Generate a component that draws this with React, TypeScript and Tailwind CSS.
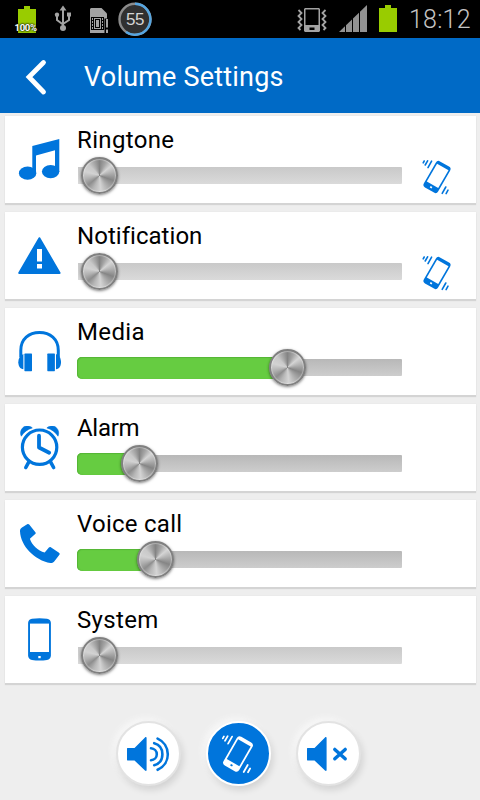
import type { ReactNode } from "react";

function MusicIcon() {
  return (
    <svg width="46" height="46" viewBox="0 0 46 46" fill="#0075dc">
      <path d="M15.3 8 42.3 1v33H38V12.2L19 17.6V36h-3.7z" />
      <ellipse cx="10.6" cy="35.2" rx="8.7" ry="6.6" />
      <ellipse cx="33.6" cy="33.6" rx="8.7" ry="6.6" />
    </svg>
  );
}

function WarningIcon() {
  return (
    <svg width="46" height="46" viewBox="0 0 46 46">
      <path
        d="M22.4 4.2 42.6 39H2.2z"
        fill="#0075dc"
        stroke="#0075dc"
        strokeWidth="2"
        strokeLinejoin="round"
      />
      <path d="M20 15h5v12.5h-5zM20 30h5v4.6h-5z" fill="#fff" />
    </svg>
  );
}

function HeadphonesIcon() {
  return (
    <svg width="46" height="46" viewBox="0 0 46 46" fill="#0075dc">
      <path
        d="M3.8 27V20.5C3.8 9 12 2.6 22.5 2.6S41.3 9 41.3 20.5V27"
        fill="none"
        stroke="#0075dc"
        strokeWidth="3"
      />
      <path d="M6.4 24v15.3C3 39 1.3 36 1.3 32.3S2.8 25.5 6.4 24z" />
      <path d="M39 24v15.3c3.4-.3 5-3.3 5-7S42.6 25.5 39 24z" />
      <rect x="7.4" y="23.6" width="7.6" height="17.6" rx="0.6" />
      <rect x="30.3" y="23.6" width="7.6" height="17.6" rx="0.6" />
    </svg>
  );
}

function AlarmIcon() {
  return (
    <svg width="46" height="46" viewBox="0 0 46 46" fill="none" stroke="#0075dc">
      <circle cx="22.6" cy="21.2" r="17.2" strokeWidth="3.2" />
      <path
        d="M22 9.7v11.8l10.2 5.2"
        strokeWidth="3.8"
        strokeLinecap="round"
        strokeLinejoin="round"
      />
      <path d="M12 35.7l-3.2 5.8M33.4 35.7l3.2 5.8" strokeWidth="3.6" strokeLinecap="round" />
      <path
        d="M4.3 10.2C2.2 6 5 .2 9.7.1c2.3 0 4.4.6 5.6 1.8C10.6 3.2 6.7 6.2 4.3 10.2zM41 10.2C43 6 40.2.2 35.5.1c-2.3 0-4.4.6-5.6 1.8C34.6 3.2 38.6 6.2 41 10.2z"
        fill="#0075dc"
        strokeWidth="0.6"
      />
    </svg>
  );
}

function CallIcon() {
  return (
    <svg width="46" height="46" viewBox="0 0 46 46" fill="#0075dc">
      <path d="M10.2 2.2C11 1.7 11.7 1.8 12.2 2.6l6.2 7.6c.5.7.4 1.3-.2 1.9l-5.3 4.7c1.8 6.2 8 12 14.8 13.7l4.2-5c.6-.6 1.2-.7 1.9-.3l8.2 5.6c.8.6.9 1.3.4 2l-5 6.4c-1 1.3-2.2 2-4 1.8C18 38.5 3.5 24 3 9.2 2.9 7.5 3.7 6.5 5 5.6z" />
    </svg>
  );
}

function PhoneIcon() {
  return (
    <svg width="46" height="46" viewBox="0 0 46 46">
      <path
        d="M15 .8Q22.5-.2 30 .8q3.6.4 3.9 4v33q-.3 3.6-3.9 4.2-7.5 1-15 0-3.6-.6-3.9-4.2v-33Q11.4 1.2 15 .8z"
        fill="#0075dc"
      />
      <rect x="13" y="5.6" width="19" height="28.4" fill="#fff" />
      <rect x="21.3" y="38" width="2.4" height="2.2" fill="#fff" />
    </svg>
  );
}

function VibrateIcon({ size, color, screen }: { size: number; color: string; screen: string }) {
  return (
    <svg width={size} height={size} viewBox="-20 -20 40 40">
      <g transform="rotate(30)">
        <rect x="-8.2" y="-15" width="16.4" height="30" rx="3" fill={color} />
        <rect x="-6.6" y="-11.6" width="13.2" height="20.6" fill={screen} />
        <rect x="-1" y="11" width="2" height="1.6" fill={screen} />
      </g>
      <path
        d="M-9.4-16.2l-2.4 4.2M-5.4-15.8l-3.6 6.4M8.8 10l-3.6 6.4M11 13.2l-1.9 3.4M-12.8-16l-1 1.8"
        stroke={color}
        strokeWidth="1.6"
        strokeLinecap="round"
      />
    </svg>
  );
}

function SpeakerIcon({ muted }: { muted?: boolean }) {
  return (
    <svg width="46" height="40" viewBox="0 0 46 40" fill="none" stroke="#0075dc">
      <path
        d="M2.5 14h7L20 3.5c.8-.8 1.6-.5 1.6.5v32c0 1-.8 1.3-1.6.5L9.5 26.5h-7c-.3 0-.5-.2-.5-.5V14.5c0-.3.2-.5.5-.5z"
        fill="#0075dc"
        stroke="none"
      />
      {muted ? (
        <path d="M29.8 15.4l10.4 9.4M40.2 15.4l-10.4 9.4" strokeWidth="3.4" strokeLinecap="round" />
      ) : (
        <g strokeWidth="2.6" strokeLinecap="round">
          <path d="M26 14.3c3.2.2 5.8 2.7 5.8 5.9S29.2 26 26 26.2" />
          <path d="M29.2 9.2c5.1 1.4 8.2 5.6 8.2 11s-3.1 9.6-8.2 11" />
          <path d="M32.6 4.6c6.2 2.7 10.2 8.8 10.2 15.6s-4 12.9-10.2 15.6" />
        </g>
      )}
    </svg>
  );
}

function StatusBar() {
  return (
    <div className="flex h-[38px] items-start justify-between bg-black pr-[9px] pl-[14px]">
      <div className="flex items-start">
        <div className="relative h-[38px] w-[26px]">
          <svg width="26" height="38" viewBox="0 0 26 38" fill="#99cc00">
            <path d="M4 9h6V6h6v3h6v24H4z" />
          </svg>
          <span className="absolute top-[22px] left-[0.5px] text-[9.5px] leading-3 font-bold tracking-[-0.3px] text-white [text-shadow:0_0_2px_#000,0_0_2px_#000]">
            100%
          </span>
        </div>
        <svg
          className="ml-[14px]"
          width="18"
          height="38"
          viewBox="0 0 18 38"
          fill="none"
          stroke="#a3a3a3"
          strokeWidth="2"
        >
          <path d="M9 9v19M9 24.5l-6-4.5v-5M9 24l6-4V15" />
          <path d="M9 5.5l3.5 5h-7z" fill="#a3a3a3" stroke="none" />
          <circle cx="9" cy="28" r="3" fill="#a3a3a3" stroke="none" />
          <circle cx="3" cy="14.8" r="2.2" fill="#a3a3a3" stroke="none" />
          <path d="M13 12.5h4v4h-4z" fill="#a3a3a3" stroke="none" />
        </svg>
        <svg className="ml-[18px]" width="19" height="38" viewBox="0 0 19 38">
          <path d="M1 8h10.5L17 13.5V33H0V9z" fill="#a3a3a3" />
          <path d="M14.5 18.5H19V34h-4.5z" fill="#000" />
          <path d="M16 19h2v8.5h-2zM16 29.5h2V33h-2z" fill="#a3a3a3" />
          <rect x="1.5" y="17.5" width="12" height="12" fill="none" stroke="#000" />
          <path
            d="M3.5 17.5v12M11.5 17.5v12M1.5 20.5h2M1.5 23.5h2M1.5 26.5h2M11.5 20.5h2M11.5 23.5h2M11.5 26.5h2"
            stroke="#000"
          />
          <rect x="5.5" y="19.5" width="4" height="8" fill="none" stroke="#000" />
        </svg>
        <div className="relative ml-[9px] h-[38px] w-[35px]">
          <svg width="35" height="38" viewBox="0 0 35 38">
            <circle cx="17" cy="19.3" r="15.5" fill="#303030" stroke="#8b8b8b" strokeWidth="2.4" />
            <path
              d="M17 3.8a15.5 15.5 0 1 1-9 28.2"
              fill="none"
              stroke="#55a5e0"
              strokeWidth="2.4"
            />
          </svg>
          <span className="absolute top-[10px] left-0 w-[34px] text-center font-['Liberation_Sans',sans-serif] text-[17px] leading-5 tracking-[-0.5px] text-[#d4d4d4]">
            55
          </span>
        </div>
      </div>
      <div className="flex items-start">
        <svg width="30" height="38" viewBox="0 0 30 38">
          <path d="M8 8h14l1 1v22l-1 1H8l-1-1V9z" fill="#a3a3a3" />
          <path d="M8.5 9.5h13V25h-13zM12.5 27.5h5V30h-5z" fill="#000" />
          <path
            d="M1.5 10l3 3-3 3 3 3-3 3 3 3-3 3 2 2M28.5 10l-3 3 3 3-3 3 3 3-3 3 3 3-2 2"
            fill="none"
            stroke="#a3a3a3"
            strokeWidth="1.8"
          />
        </svg>
        <svg className="ml-[12px]" width="28" height="38" viewBox="0 0 28 38">
          <path d="M0 32L28 5v27z" fill="#929292" />
          <path d="M6.5 24v8M13.5 17v15M20.5 10v22" stroke="#000" />
        </svg>
        <svg className="ml-[12px]" width="18" height="38" viewBox="0 0 18 38" fill="#99cc00">
          <path d="M0 8h6V5h6v3h6v24H0z" />
        </svg>
        <span className="ml-[12px] w-[62px] pt-[6px] text-[25px] leading-7 font-light tracking-[0.2px] text-[#c4c4c4]">
          18:12
        </span>
      </div>
    </div>
  );
}

function Slider({ value }: { value: number }) {
  const active = value > 0;
  return (
    <div className="relative h-[22px] w-[325px] pt-[2px] pl-px">
      <div
        className={
          active
            ? "h-[17px] rounded-r-[1px] bg-linear-to-b from-[#b8b8b8] to-[#cdcdcd]"
            : "h-[17px] rounded-r-[1px] bg-linear-to-b from-[#c9c9c9] to-[#dadada]"
        }
      />
      {active && (
        <div
          className="absolute inset-y-0 left-0 rounded-l-[5px] bg-[#66cc41] shadow-[inset_0_1px_1px_#55b536,inset_1px_0_1px_#55b536]"
          style={{ width: value + 22 }}
        />
      )}
      <div
        className="absolute -top-2 size-[37px] rounded-full border-2 border-[#808080] bg-[conic-gradient(from_0deg,#848484,#a5a5a5_25deg,#d5d5d5_50deg,#b5b5b5_75deg,#858585_110deg,#a8a8a8_140deg,#d4d4d4_175deg,#b5b5b5_205deg,#8d8d8d_230deg,#b0b0b0_255deg,#d2d2d2_285deg,#c9c9c9_315deg,#848484)] shadow-[0_1px_3px_rgba(0,0,0,0.5),inset_0_0_1px_1px_rgba(255,255,255,0.35)]"
        style={{ left: value + 3.5 }}
      />
    </div>
  );
}

interface VolumeRowProps {
  label: string;
  icon: ReactNode;
  value: number;
  vibrate?: boolean;
  tracking?: string;
}

function VolumeRow({ label, icon, value, vibrate, tracking = "tracking-[0.35px]" }: VolumeRowProps) {
  return (
    <div className="flex h-[87px] bg-white shadow-[0_2px_1px_#d4d4d4,0_0_1px_#dcdcdc]">
      <div className="w-[72px] shrink-0 pt-[22px] pl-[12px]">{icon}</div>
      <div className="w-[325px] shrink-0 pt-[10px]">
        <h2 className={`mb-[11px] text-[24px] leading-7 text-black ${tracking}`}>{label}</h2>
        <Slider value={value} />
      </div>
      {vibrate && (
        <div className="pt-[41px] pl-[15px]">
          <VibrateIcon size={40} color="#0075dc" screen="#fff" />
        </div>
      )}
    </div>
  );
}

const volumes: VolumeRowProps[] = [
  { label: "Ringtone", icon: <MusicIcon />, value: 0, vibrate: true },
  {
    label: "Notification",
    icon: <WarningIcon />,
    value: 0,
    vibrate: true,
    tracking: "tracking-[0.04px]",
  },
  { label: "Media", icon: <HeadphonesIcon />, value: 188 },
  { label: "Alarm", icon: <AlarmIcon />, value: 40, tracking: "tracking-[-0.3px]" },
  { label: "Voice call", icon: <CallIcon />, value: 56, tracking: "tracking-[0.25px]" },
  { label: "System", icon: <PhoneIcon />, value: 0 },
];

function ModeButton({ selected, children }: { selected?: boolean; children: ReactNode }) {
  return (
    <button
      className={
        selected
          ? "flex size-[65px] items-center justify-center rounded-full border-2 border-white bg-[#0075dc] shadow-[2px_4px_7px_rgba(0,0,0,0.12),-3px_-3px_6px_#f8f8f8]"
          : "flex size-[65px] items-center justify-center rounded-full border-2 border-[#e3e3e3] bg-white shadow-[2px_4px_7px_rgba(0,0,0,0.12),-3px_-3px_6px_#f8f8f8]"
      }
    >
      {children}
    </button>
  );
}

export default function App() {
  return (
    <div className="flex h-[800px] w-[480px] flex-col overflow-hidden bg-[#eeeeee] font-['Roboto',sans-serif]">
      <StatusBar />
      <header className="flex h-[75px] items-center bg-[#006ac6] pl-[24px]">
        <svg width="24" height="40" viewBox="0 0 24 40">
          <path
            d="M19.5 6.5L5 21l14.5 15"
            fill="none"
            stroke="#fff"
            strokeWidth="4.8"
            strokeLinecap="round"
          />
        </svg>
        <h1 className="ml-[36px] pt-[2px] text-[27px] leading-8 tracking-[0.2px] text-white">
          Volume Settings
        </h1>
      </header>
      <main className="flex flex-col gap-[9px] pt-[3px] pr-[4px] pl-[5px]">
        {volumes.map((v) => (
          <VolumeRow key={v.label} {...v} />
        ))}
      </main>
      <footer className="flex gap-[25px] pt-[38px] pl-[115.5px]">
        <ModeButton>
          <SpeakerIcon />
        </ModeButton>
        <ModeButton selected>
          <VibrateIcon size={44} color="#fff" screen="#0075dc" />
        </ModeButton>
        <ModeButton>
          <SpeakerIcon muted />
        </ModeButton>
      </footer>
    </div>
  );
}
